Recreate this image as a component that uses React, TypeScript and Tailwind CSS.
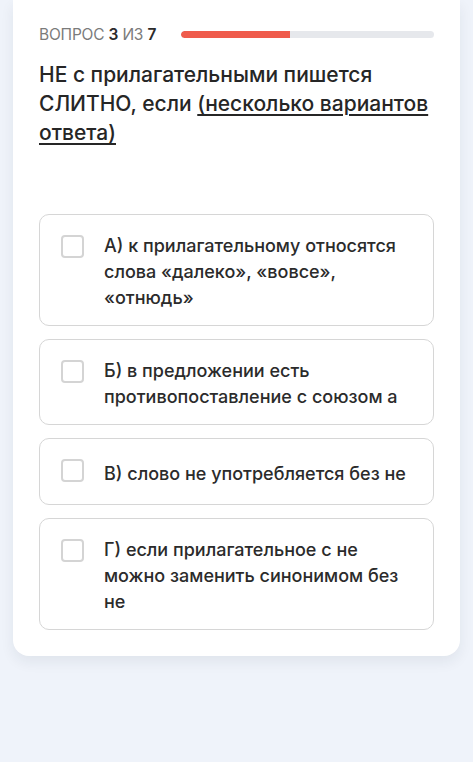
const options = [
  'А) к прилагательному относятся слова «далеко», «вовсе», «отнюдь»',
  'Б) в предложении есть противопоставление с союзом а',
  'В) слово не употребляется без не',
  'Г) если прилагательное с не можно заменить синонимом без не',
];

function OptionCard({ text }: { text: string }) {
  return (
    <label className="flex min-h-[67px] items-start gap-[20px] rounded-[10px] border border-[#d6d6d6] bg-white pl-[21px] pr-5 pt-[18px] pb-[14px] cursor-pointer">
      <span className="flex h-[26px] shrink-0 items-center">
        <span className="block h-[23px] w-[23px] rounded-[4px] border-2 border-[#d4d4d4] bg-white" />
      </span>
      <span className="self-center text-[18px] leading-[26px] font-medium text-[#2b2b2b]">{text}</span>
    </label>
  );
}

export default function App() {
  const current = 3;
  const total = 7;

  return (
    <div className="min-h-[762px] bg-[#eff3fa] px-[13px]" style={{ fontFamily: 'Inter, "Noto Sans", sans-serif' }}>
      <div className="rounded-b-[16px] bg-white px-[26px] pt-[23px] pb-[26px] shadow-[0_6px_14px_rgba(30,40,60,0.07)]">
        {/* progress header */}
        <div className="flex items-center gap-[25px]">
          <span className="text-[15.5px] tracking-[-0.2px] text-[#7b7b7b] whitespace-nowrap">
            ВОПРОС <b className="font-semibold text-[#2b2b2b]">{current}</b> ИЗ <b className="font-semibold text-[#2b2b2b]">{total}</b>
          </span>
          <div className="h-[7px] flex-1 overflow-hidden rounded-full bg-[#e6e8ec]">
            <div className="h-full rounded-l-full bg-[#ef5b4c]" style={{ width: `${(current / total) * 100}%` }} />
          </div>
        </div>

        <h1 className="mt-[14px] text-[21px] leading-[29px] font-medium text-[#262626]">
          НЕ с прилагательными пишется СЛИТНО, если{' '}
          <span className="underline underline-offset-[3px] decoration-[1.5px]">(несколько вариантов ответа)</span>
        </h1>

        <div className="mt-[67px] flex flex-col gap-[13px]">
          {options.map((o) => (
            <OptionCard key={o} text={o} />
          ))}
        </div>
      </div>
    </div>
  );
}
